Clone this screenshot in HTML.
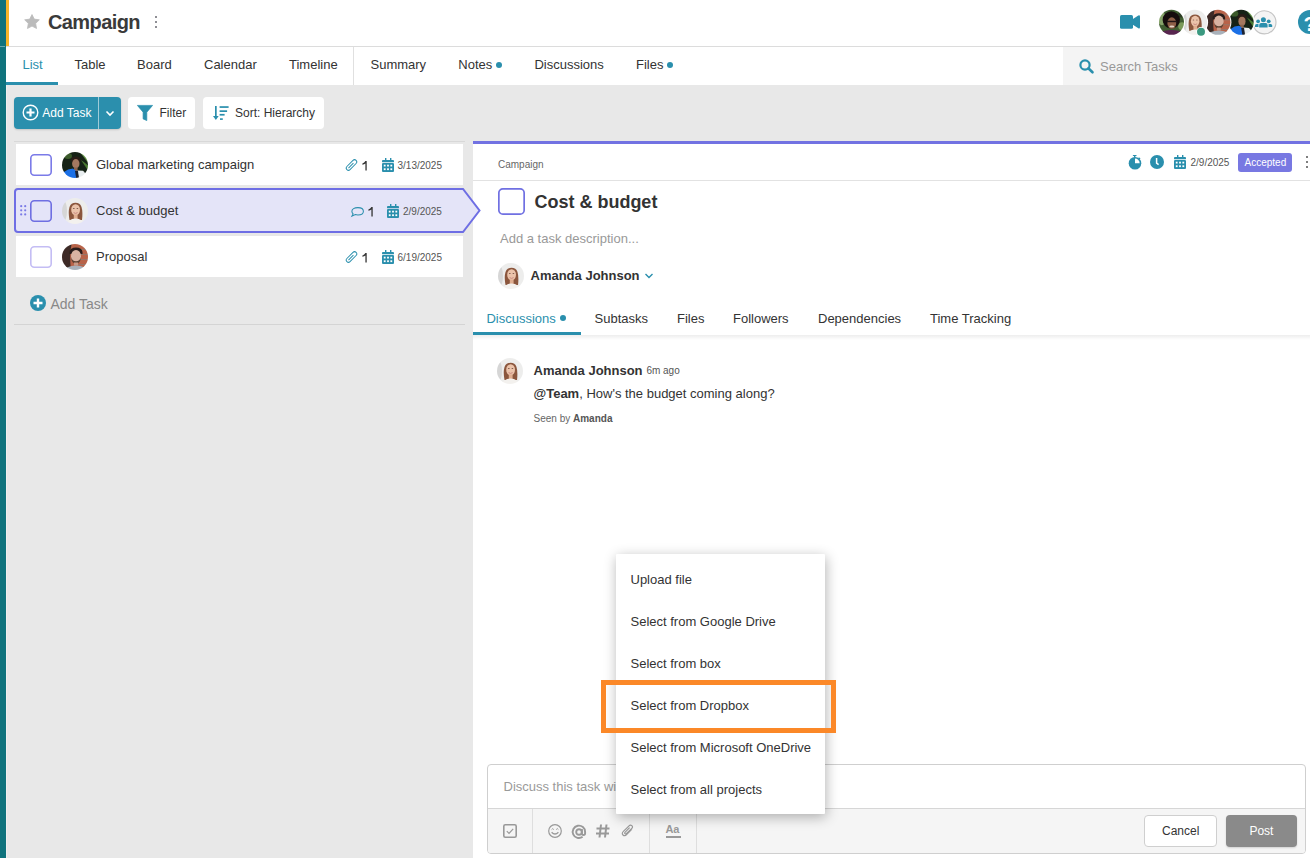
<!DOCTYPE html>
<html><head><meta charset="utf-8">
<style>
*{box-sizing:border-box;margin:0;padding:0}
html,body{width:1310px;height:858px;overflow:hidden;background:#e8e8e8;font-family:"Liberation Sans",sans-serif;color:#333;position:relative}
.a{position:absolute}
svg{overflow:visible}
.t{position:absolute;white-space:nowrap;line-height:1}
</style></head><body>
<svg width="0" height="0" style="position:absolute">
<defs>
<clipPath id="cc"><circle cx="13" cy="13" r="13"/></clipPath>
<filter id="bl" x="-10%" y="-10%" width="120%" height="120%"><feGaussianBlur stdDeviation="0.55"/></filter>
<symbol id="av1" viewBox="0 0 26 26"><g clip-path="url(#cc)"><g filter="url(#bl)">
<rect x="-2" y="-2" width="30" height="30" fill="#3f5d30"/>
<ellipse cx="3" cy="9" rx="4" ry="7" fill="#86a36a"/>
<ellipse cx="24" cy="17" rx="4" ry="4" fill="#7a9a5a"/>
<ellipse cx="23" cy="5" rx="3" ry="3" fill="#2a3a20"/>
<ellipse cx="12.8" cy="10.5" rx="9" ry="9" fill="#15100d"/>
<ellipse cx="13.3" cy="13.8" rx="4.6" ry="6" fill="#8d5f47"/>
<rect x="8.3" y="11.4" width="10.2" height="1.5" fill="#201818"/>
<ellipse cx="13.3" cy="17.4" rx="2.6" ry="1.1" fill="#e4d6c8"/>
<path d="M-1 28Q2 20.5 13 21Q24 20.5 27 28z" fill="#58284f"/>
</g></g></symbol>
<symbol id="av2" viewBox="0 0 26 26"><g clip-path="url(#cc)"><g filter="url(#bl)">
<rect x="-2" y="-2" width="30" height="30" fill="#ededec"/>
<ellipse cx="2" cy="13" rx="3" ry="10" fill="#d6d6d6"/>
<path d="M7.5 22Q6 14 7.5 9Q9 4.8 13.5 4.8Q18 4.8 19.5 9Q21 14 20 22z" fill="#8b573e"/>
<ellipse cx="13.6" cy="11.8" rx="4.4" ry="5.6" fill="#ebc3aa"/>
<ellipse cx="11.8" cy="10.6" rx="0.9" ry="0.5" fill="#7a5548"/>
<ellipse cx="15.4" cy="10.6" rx="0.9" ry="0.5" fill="#7a5548"/>
<path d="M11.6 14.6Q13.6 16.2 15.6 14.6" stroke="#c98880" stroke-width="1" fill="none"/>
<rect x="11.8" y="16.5" width="3.8" height="4.5" fill="#e0ae90"/>
<path d="M4 28Q6 20.5 13.6 20.5Q21 20.5 23 28z" fill="#f3f1ee"/>
</g></g></symbol>
<symbol id="av3" viewBox="0 0 26 26"><g clip-path="url(#cc)"><g filter="url(#bl)">
<rect x="-2" y="-2" width="30" height="30" fill="#b8644a"/>
<path d="M16 5.5H28M15 10.5H28M15 15.5H28M16 20.5H28" stroke="#8e7a70" stroke-width="0.8"/>
<path d="M-2 -2H10Q7 10 9 26H-2z" fill="#3d2c25"/>
<path d="M7.5 8Q8 3.5 14 3.5Q20 3.5 20.5 8V10H7.5z" fill="#2a1f1a"/>
<ellipse cx="14" cy="12.3" rx="5" ry="6.4" fill="#d9b3a2"/>
<path d="M9 13Q9.5 19.6 14 19.8Q18.5 19.6 19 13Q17.8 17.2 14 17.2Q10.2 17.2 9 13z" fill="#5b4131"/>
<rect x="12" y="18.5" width="4" height="3" fill="#c89a86"/>
<path d="M1 28Q4 21.5 14 21.5Q24 21.5 26 28z" fill="#a9b1ba"/>
</g></g></symbol>
<symbol id="av4" viewBox="0 0 26 26"><g clip-path="url(#cc)"><g filter="url(#bl)">
<rect x="-2" y="-2" width="30" height="30" fill="#172416"/>
<path d="M17 -1L27 12V4z" fill="#5f8f42"/>
<path d="M19 8L27 20V14z" fill="#4a7a32"/>
<ellipse cx="6" cy="4" rx="4" ry="3" fill="#3a5a2a"/>
<ellipse cx="13.8" cy="8.2" rx="4.8" ry="3.8" fill="#2a1e16"/>
<ellipse cx="13.8" cy="11.8" rx="3.7" ry="4.7" fill="#a47860"/>
<rect x="12" y="15.5" width="3.6" height="3.5" fill="#8a6450"/>
<path d="M-1 28Q0 17 11 16.5L14 19 16 28z" fill="#1d6fe6"/>
<path d="M15.5 18.5L21 18.8Q24 21 24 26L17 28z" fill="#e9eef0"/>
<path d="M13 19L16 19 17 28 14.5 28z" fill="#1a2230"/>
<path d="M20 26L26 22 26 28 19 28z" fill="#1d6fe6"/>
</g></g></symbol>
</defs></svg>
<!-- left stripes -->
<div class="a" style="left:0;top:0;width:6px;height:858px;background:#0f737d"></div>
<div class="a" style="left:0;top:46px;width:5px;height:1px;background:#6aa7ad"></div>
<div class="a" style="left:6px;top:0;width:1px;height:858px;background:#f0f0f0"></div>
<!-- header -->
<div class="a" style="left:6px;top:0;width:1304px;height:46px;background:#fff"></div>
<div class="a" style="left:6px;top:0;width:3px;height:46px;background:#f6b52a"></div>
<div class="a" style="left:6px;top:46px;width:1304px;height:1px;background:#dcdcdc"></div>
<!-- tab bar -->
<div class="a" style="left:6px;top:47px;width:1304px;height:38px;background:#fff"></div>

<!-- header content -->
<svg class="a" style="left:24px;top:14px" width="16" height="15.3" viewBox="0 0 24 23"><path d="M12 0.8l3.4 6.9 7.6 1.1-5.5 5.4 1.3 7.6L12 18.2l-6.8 3.6 1.3-7.6L1 8.8l7.6-1.1z" fill="#bbb" stroke="#bbb" stroke-width="1.2" stroke-linejoin="round"/></svg>
<div class="t" style="left:48px;top:11.8px;font-size:20px;font-weight:bold;color:#3a3a3a;letter-spacing:-0.6px">Campaign</div>
<div class="a" style="left:155px;top:16.3px;width:2px;height:2px;border-radius:1px;background:#6a6a72"></div>
<div class="a" style="left:155px;top:21px;width:2px;height:2px;border-radius:1px;background:#6a6a72"></div>
<div class="a" style="left:155px;top:25.7px;width:2px;height:2px;border-radius:1px;background:#6a6a72"></div>
<!-- video icon -->
<svg class="a" style="left:1120px;top:15px" width="20" height="14" viewBox="0 0 20 14"><rect x="0" y="0" width="13" height="13.8" rx="1.6" fill="#2a8fad"/><path d="M12.5 4.2L18.3 0.5Q20 -0.2 20 1.6V12.2Q20 14 18.3 13.3L12.5 9.6z" fill="#2a8fad"/></svg>
<!-- avatars -->
<svg class="a" style="left:1150px;top:0px" width="140" height="46" viewBox="1150 0 140 46">
<circle cx="1264.4" cy="22.3" r="11.6" fill="#f4f4f4" stroke="#c4c4c4" stroke-width="1.1"/>
<circle cx="1241.2" cy="22.3" r="13.5" fill="#fff"/><svg x="1228.7" y="9.8" width="25" height="25" viewBox="0 0 26 26"><use href="#av4"/></svg>
<circle cx="1217.9" cy="22.3" r="13.5" fill="#fff"/><svg x="1205.4" y="9.8" width="25" height="25" viewBox="0 0 26 26"><use href="#av3"/></svg>
<circle cx="1194.6" cy="22.3" r="13.5" fill="#fff"/><svg x="1182.1" y="9.8" width="25" height="25" viewBox="0 0 26 26"><use href="#av2"/></svg>
<circle cx="1171.5" cy="22.3" r="13.5" fill="#fff"/><svg x="1159" y="9.8" width="25" height="25" viewBox="0 0 26 26"><use href="#av1"/></svg>
<circle cx="1201" cy="31.8" r="4.8" fill="#fff"/><circle cx="1201" cy="31.8" r="4" fill="#3b9980"/>
</svg>
<svg class="a" style="left:1254px;top:16px" width="20" height="13" viewBox="1254 16 20 13"><g fill="#2a8fad"><circle cx="1263.4" cy="19.8" r="2.5"/><circle cx="1258.1" cy="21.3" r="1.9"/><circle cx="1268.7" cy="21.3" r="1.9"/><path d="M1259.2 27.6V25Q1259.2 23 1261.2 23H1265.6Q1267.6 23 1267.6 25V27.6z"/><path d="M1255 27V25.5Q1255 23.9 1256.6 23.9H1258.5V27z"/><path d="M1272.2 27V25.5Q1272.2 23.9 1270.6 23.9H1268.6V27z"/></g></svg>
<div class="a" style="left:1298px;top:10px;width:24px;height:24px;border-radius:50%;background:#2a8fad"></div>
<div class="t" style="left:1303.5px;top:12.5px;font-size:21px;font-weight:bold;color:#fff">?</div>

<!-- tabs -->
<div class="t" style="left:22.5px;top:57.8px;font-size:13px;color:#2a8fad">List</div>
<div class="a" style="left:6px;top:82px;width:52px;height:3px;background:#2a8fad"></div>
<div class="t" style="left:74.5px;top:57.8px;font-size:13px">Table</div>
<div class="t" style="left:137px;top:57.8px;font-size:13px">Board</div>
<div class="t" style="left:204px;top:57.8px;font-size:13px">Calendar</div>
<div class="t" style="left:289px;top:57.8px;font-size:13px">Timeline</div>
<div class="a" style="left:353px;top:47px;width:1px;height:38px;background:#e0e0e0"></div>
<div class="t" style="left:370.5px;top:57.8px;font-size:13px">Summary</div>
<div class="t" style="left:458.3px;top:57.8px;font-size:13px">Notes</div>
<div class="a" style="left:496px;top:62px;width:6px;height:6px;border-radius:50%;background:#2a8fad"></div>
<div class="t" style="left:534.4px;top:57.8px;font-size:13px">Discussions</div>
<div class="t" style="left:636px;top:57.8px;font-size:13px">Files</div>
<div class="a" style="left:667px;top:62px;width:6px;height:6px;border-radius:50%;background:#2a8fad"></div>
<!-- search -->
<div class="a" style="left:1063px;top:47px;width:247px;height:38px;background:#f4f4f4"></div>
<svg class="a" style="left:1079px;top:59px" width="16" height="14" viewBox="0 0 16 14"><circle cx="6" cy="6" r="4.6" fill="none" stroke="#2a8fad" stroke-width="2.2"/><path d="M9.3 9.3L13.5 13.3" stroke="#2a8fad" stroke-width="2.6" stroke-linecap="round"/></svg>
<div class="t" style="left:1100px;top:59.8px;font-size:13px;color:#999">Search Tasks</div>
<!-- toolbar -->
<div class="a" style="left:14px;top:97px;width:107px;height:32px;border-radius:4px;background:#2b8fad;box-shadow:0 1px 2px rgba(0,0,0,.15)"></div>
<div class="a" style="left:98px;top:97px;width:1px;height:32px;background:#9fcbd8"></div>
<svg class="a" style="left:22.3px;top:104.3px" width="17" height="17" viewBox="0 0 17 17"><circle cx="8.5" cy="8.5" r="7.3" fill="none" stroke="#fff" stroke-width="1.4"/><path d="M8.5 4.5v8M4.5 8.5h8" stroke="#fff" stroke-width="2.2"/></svg>
<div class="t" style="left:42.3px;top:106.6px;font-size:12px;color:#fff">Add Task</div>
<svg class="a" style="left:105px;top:110px" width="10" height="7" viewBox="0 0 10 7"><path d="M1.5 1.5L5 5 8.5 1.5" fill="none" stroke="#fff" stroke-width="1.6"/></svg>

<div class="a" style="left:128px;top:97px;width:67px;height:32px;border-radius:4px;background:#fff"></div>
<svg class="a" style="left:137px;top:105px" width="16" height="16" viewBox="0 0 16 16"><path d="M0.4 0.4H15.6L9.8 7.2V15.6L6.1 13.9V7.2z" fill="#2a8fad" stroke="#2a8fad" stroke-width="0.7" stroke-linejoin="round"/></svg>
<div class="t" style="left:159.5px;top:106.6px;font-size:12px">Filter</div>

<div class="a" style="left:203px;top:97px;width:121px;height:32px;border-radius:4px;background:#fff"></div>
<svg class="a" style="left:212.7px;top:106px" width="17" height="15" viewBox="0 0 17 15"><g fill="#2a8fad"><rect x="2" y="0" width="1.7" height="11.5"/><path d="M0 10h5.7L2.85 13.9z"/><rect x="6.6" y="0.2" width="9" height="1.7"/><rect x="6.6" y="4.3" width="7.5" height="1.7"/><rect x="6.6" y="7.9" width="5" height="1.7"/><rect x="7" y="12.3" width="2.8" height="1.6"/></g></svg>
<div class="t" style="left:235px;top:106.6px;font-size:12px">Sort: Hierarchy</div>

<!-- panel bg -->
<div class="a" style="left:473px;top:141px;width:837px;height:717px;background:#fff"></div>
<div class="a" style="left:473px;top:141px;width:837px;height:3px;background:#7272e2"></div>
<!-- task list -->
<div class="a" style="left:14px;top:141px;width:451px;height:1px;background:#d8d8d8"></div>
<div class="a" style="left:16px;top:144px;width:447px;height:41px;background:#fff"></div>
<svg class="a" style="left:30px;top:154px" width="22" height="22" viewBox="0 0 22 22"><rect x="0.8" y="0.8" width="20.4" height="20.4" rx="3.5" fill="#fff" stroke="#7b7be8" stroke-width="1.6"/></svg>
<svg class="a" style="left:62px;top:152px" width="26" height="26" viewBox="0 0 26 26"><use href="#av4"/></svg>
<div class="t" style="left:96px;top:158px;font-size:13px">Global marketing campaign</div>
<svg class="a" style="left:346px;top:159px" width="11" height="12" viewBox="0 0 11 12"><g transform="rotate(-45 5.5 6)" fill="none" stroke="#2a8fad" stroke-width="0.95"><rect x="-1" y="3.8" width="13" height="4.4" rx="2.2"/><path d="M1.2 6H8.2"/></g></svg>
<svg class="a" style="left:361.8px;top:160.8px" width="5" height="9.4" viewBox="0 0 5 9.4"><path d="M3.4 0H4.7V9.4H3.4V2.4Q2.3 3.3 0.4 3.7V2.5Q2.4 1.9 3.4 0z" fill="#333"/></svg>
<svg class="a" style="left:382px;top:158px" width="12" height="14" viewBox="0 0 12 14"><g fill="#2a8fad"><rect x="0" y="2" width="12" height="2.3" rx="0.9"/><rect x="0" y="4.9" width="12" height="9.1" rx="1.1"/><rect x="3" y="0" width="1.4" height="2.6"/><rect x="8" y="0" width="1.4" height="2.6"/></g><g fill="#fff"><rect x="1.8" y="6.7" width="1.8" height="1.8"/><rect x="5.1" y="6.7" width="1.8" height="1.8"/><rect x="8.4" y="6.7" width="1.8" height="1.8"/><rect x="1.8" y="10.3" width="1.8" height="1.8"/><rect x="5.1" y="10.3" width="1.8" height="1.8"/><rect x="8.4" y="10.3" width="1.8" height="1.8"/></g></svg>
<div class="t" style="left:397.5px;top:160.5px;font-size:10px;color:#555">3/13/2025</div>

<!-- selected row -->
<svg class="a" style="left:14px;top:188px" width="468" height="46" viewBox="0 0 468 46"><path d="M4 1H449L465.5 22.5 449 44H4Q1 44 1 41V4Q1 1 4 1z" fill="#e4e4f8" stroke="#6e6ee4" stroke-width="2"/></svg>
<svg class="a" style="left:20px;top:205px" width="7" height="11" viewBox="0 0 7 11"><g fill="#7a7ae6"><circle cx="1.2" cy="1.2" r="1.1"/><circle cx="5.2" cy="1.2" r="1.1"/><circle cx="1.2" cy="5.3" r="1.1"/><circle cx="5.2" cy="5.3" r="1.1"/><circle cx="1.2" cy="9.4" r="1.1"/><circle cx="5.2" cy="9.4" r="1.1"/></g></svg>
<svg class="a" style="left:30px;top:200px" width="22" height="22" viewBox="0 0 22 22"><rect x="0.8" y="0.8" width="20.4" height="20.4" rx="3.5" fill="none" stroke="#6f6fe2" stroke-width="1.6"/></svg>
<svg class="a" style="left:62px;top:198px" width="26" height="26" viewBox="0 0 26 26"><use href="#av2"/></svg>
<div class="t" style="left:96px;top:204px;font-size:13px">Cost &amp; budget</div>
<svg class="a" style="left:350.5px;top:206.5px" width="14" height="12" viewBox="0 0 14 12"><path d="M6.9 0.6C10.2 0.6 12.4 2.2 12.4 4.3S10.2 8 6.9 8C6 8 5.1 7.9 4.3 7.6L0.9 9.2 2.1 6.9C1.3 6.2 0.9 5.3 0.9 4.3 0.9 2.2 3.3 0.6 6.9 0.6z" fill="none" stroke="#2a8fad" stroke-width="1.05"/></svg>
<svg class="a" style="left:367.9px;top:206.8px" width="5" height="9.4" viewBox="0 0 5 9.4"><path d="M3.4 0H4.7V9.4H3.4V2.4Q2.3 3.3 0.4 3.7V2.5Q2.4 1.9 3.4 0z" fill="#333"/></svg>
<svg class="a" style="left:387px;top:204px" width="12" height="14" viewBox="0 0 12 14"><g fill="#2a8fad"><rect x="0" y="2" width="12" height="2.3" rx="0.9"/><rect x="0" y="4.9" width="12" height="9.1" rx="1.1"/><rect x="3" y="0" width="1.4" height="2.6"/><rect x="8" y="0" width="1.4" height="2.6"/></g><g fill="#fff"><rect x="1.8" y="6.7" width="1.8" height="1.8"/><rect x="5.1" y="6.7" width="1.8" height="1.8"/><rect x="8.4" y="6.7" width="1.8" height="1.8"/><rect x="1.8" y="10.3" width="1.8" height="1.8"/><rect x="5.1" y="10.3" width="1.8" height="1.8"/><rect x="8.4" y="10.3" width="1.8" height="1.8"/></g></svg>
<div class="t" style="left:403px;top:207.3px;font-size:10px;color:#555">2/9/2025</div>

<!-- row 3 -->
<div class="a" style="left:16px;top:236px;width:447px;height:41px;background:#fff"></div>
<svg class="a" style="left:30px;top:246px" width="22" height="22" viewBox="0 0 22 22"><rect x="0.8" y="0.8" width="20.4" height="20.4" rx="3.5" fill="#fff" stroke="#c4bdf4" stroke-width="1.6"/></svg>
<svg class="a" style="left:62px;top:244px" width="26" height="26" viewBox="0 0 26 26"><use href="#av3"/></svg>
<div class="t" style="left:96px;top:250px;font-size:13px">Proposal</div>
<svg class="a" style="left:346px;top:251px" width="11" height="12" viewBox="0 0 11 12"><g transform="rotate(-45 5.5 6)" fill="none" stroke="#2a8fad" stroke-width="0.95"><rect x="-1" y="3.8" width="13" height="4.4" rx="2.2"/><path d="M1.2 6H8.2"/></g></svg>
<svg class="a" style="left:361.8px;top:252.8px" width="5" height="9.4" viewBox="0 0 5 9.4"><path d="M3.4 0H4.7V9.4H3.4V2.4Q2.3 3.3 0.4 3.7V2.5Q2.4 1.9 3.4 0z" fill="#333"/></svg>
<svg class="a" style="left:382px;top:250px" width="12" height="14" viewBox="0 0 12 14"><g fill="#2a8fad"><rect x="0" y="2" width="12" height="2.3" rx="0.9"/><rect x="0" y="4.9" width="12" height="9.1" rx="1.1"/><rect x="3" y="0" width="1.4" height="2.6"/><rect x="8" y="0" width="1.4" height="2.6"/></g><g fill="#fff"><rect x="1.8" y="6.7" width="1.8" height="1.8"/><rect x="5.1" y="6.7" width="1.8" height="1.8"/><rect x="8.4" y="6.7" width="1.8" height="1.8"/><rect x="1.8" y="10.3" width="1.8" height="1.8"/><rect x="5.1" y="10.3" width="1.8" height="1.8"/><rect x="8.4" y="10.3" width="1.8" height="1.8"/></g></svg>
<div class="t" style="left:397.5px;top:252.5px;font-size:10px;color:#555">6/19/2025</div>

<!-- add task -->
<svg class="a" style="left:30px;top:295px" width="16" height="16" viewBox="0 0 16 16"><circle cx="8" cy="8" r="8" fill="#2a8fad"/><path d="M8 3.5v9M3.5 8h9" stroke="#fff" stroke-width="2.4"/></svg>
<div class="t" style="left:50.5px;top:296.5px;font-size:14px;color:#888">Add Task</div>
<div class="a" style="left:14px;top:324px;width:451px;height:1px;background:#d4d4d4"></div>
<!-- right panel -->
<div class="t" style="left:498px;top:159.5px;font-size:10px;color:#666">Campaign</div>
<!-- stopwatch -->
<svg class="a" style="left:1128px;top:154px" width="14" height="16" viewBox="0 0 14 16"><g fill="#2a8fad"><rect x="4.8" y="0.9" width="3.8" height="1.1" rx=".5"/><rect x="6" y="1.8" width="1.4" height="1.8"/><path d="M11 3.2l1.5 1.3-0.9 1-1.5-1.3z"/><circle cx="7" cy="9.2" r="6.3"/></g><path d="M7 9.2V4.5A4.7 4.7 0 0 1 11.7 9.2z" fill="#fff"/></svg>
<svg class="a" style="left:1150px;top:155px" width="14" height="14" viewBox="0 0 14 14"><circle cx="7" cy="7" r="7" fill="#2a8fad"/><path d="M6.6 3V8.2L8.6 9.6" fill="none" stroke="#fff" stroke-width="1.5"/></svg>
<svg class="a" style="left:1174px;top:155px" width="12" height="14" viewBox="0 0 12 14"><g fill="#2a8fad"><rect x="0" y="2" width="12" height="2.3" rx="0.9"/><rect x="0" y="4.9" width="12" height="9.1" rx="1.1"/><rect x="3" y="0" width="1.4" height="2.6"/><rect x="8" y="0" width="1.4" height="2.6"/></g><g fill="#fff"><rect x="1.8" y="6.7" width="1.8" height="1.8"/><rect x="5.1" y="6.7" width="1.8" height="1.8"/><rect x="8.4" y="6.7" width="1.8" height="1.8"/><rect x="1.8" y="10.3" width="1.8" height="1.8"/><rect x="5.1" y="10.3" width="1.8" height="1.8"/><rect x="8.4" y="10.3" width="1.8" height="1.8"/></g></svg>
<div class="t" style="left:1190.5px;top:157.5px;font-size:10px;color:#555">2/9/2025</div>
<div class="a" style="left:1238px;top:153px;width:54px;height:19px;border-radius:3px;background:#7878e2"></div>
<div class="t" style="left:1244.5px;top:157.5px;font-size:10px;color:#fff">Accepted</div>
<div class="a" style="left:1305.5px;top:155.5px;width:2px;height:2px;border-radius:1px;background:#555"></div>
<div class="a" style="left:1305.5px;top:160.5px;width:2px;height:2px;border-radius:1px;background:#555"></div>
<div class="a" style="left:1305.5px;top:165.5px;width:2px;height:2px;border-radius:1px;background:#555"></div>
<div class="a" style="left:473px;top:180px;width:837px;height:1px;background:#e2e2e2"></div>

<svg class="a" style="left:498px;top:188px" width="27" height="27" viewBox="0 0 27 27"><rect x="0.85" y="0.85" width="25.3" height="25.3" rx="4" fill="none" stroke="#7070e2" stroke-width="1.7"/></svg>
<div class="t" style="left:534.4px;top:192.5px;font-size:18px;font-weight:bold;color:#333">Cost &amp; budget</div>
<div class="t" style="left:500px;top:231.5px;font-size:13px;color:#999">Add a task description...</div>
<svg class="a" style="left:498px;top:263px" width="26" height="26" viewBox="0 0 26 26"><use href="#av2"/></svg>
<div class="t" style="left:530.5px;top:269px;font-size:13px;font-weight:bold;color:#333">Amanda Johnson</div>
<svg class="a" style="left:644px;top:272px" width="10" height="8" viewBox="0 0 10 8"><path d="M1.5 2L5 5.5 8.5 2" fill="none" stroke="#2a8fad" stroke-width="1.4"/></svg>

<!-- panel tabs -->
<div class="t" style="left:486.4px;top:311.5px;font-size:13px;color:#2a8fad">Discussions</div>
<div class="a" style="left:559.5px;top:314.5px;width:6px;height:6px;border-radius:50%;background:#2a8fad"></div>
<div class="t" style="left:594.5px;top:311.5px;font-size:13px">Subtasks</div>
<div class="t" style="left:677px;top:311.5px;font-size:13px">Files</div>
<div class="t" style="left:733px;top:311.5px;font-size:13px">Followers</div>
<div class="t" style="left:818px;top:311.5px;font-size:13px">Dependencies</div>
<div class="t" style="left:930px;top:311.5px;font-size:13px">Time Tracking</div>
<div class="a" style="left:473px;top:332px;width:108px;height:3px;background:#2a8fad"></div>
<div class="a" style="left:473px;top:335px;width:837px;height:5px;background:linear-gradient(rgba(0,0,0,.07),rgba(0,0,0,0))"></div>

<!-- message -->
<svg class="a" style="left:497px;top:358px" width="26" height="26" viewBox="0 0 26 26"><use href="#av2"/></svg>
<div class="t" style="left:533.5px;top:363.5px;font-size:13px;font-weight:bold;color:#333">Amanda Johnson</div>
<div class="t" style="left:646.4px;top:365.5px;font-size:10px;color:#555">6m ago</div>
<div class="t" style="left:533.5px;top:387px;font-size:13px;color:#333"><b>@Team</b>, How's the budget coming along?</div>
<div class="t" style="left:533.5px;top:413.5px;font-size:10px;color:#666">Seen by <b style="color:#555">Amanda</b></div>

<!-- composer -->
<div class="a" style="left:487px;top:764px;width:819px;height:90px;border:1px solid #cfcfcf;border-radius:4px;background:#fff;overflow:hidden">
  <div class="a" style="left:0;top:43px;width:819px;height:47px;background:#f5f5f5;border-top:1px solid #d6d6d6"></div>
</div>
<div class="t" style="left:503.5px;top:780px;font-size:13px;color:#9a9a9a">Discuss this task wi</div>
<div class="a" style="left:532px;top:809px;width:1px;height:44px;background:#dedede"></div>
<div class="a" style="left:649px;top:809px;width:1px;height:44px;background:#dedede"></div>
<div class="a" style="left:696px;top:809px;width:1px;height:44px;background:#dedede"></div>
<svg class="a" style="left:503px;top:824px" width="14" height="14" viewBox="0 0 14 14"><rect x="0.8" y="0.8" width="12.4" height="12.4" rx="1.5" fill="none" stroke="#999" stroke-width="1.6"/><path d="M3.8 7.2l2.2 2.2 4.2-4.6" fill="none" stroke="#999" stroke-width="1.2"/></svg>
<svg class="a" style="left:548px;top:824px" width="14" height="14" viewBox="0 0 14 14"><circle cx="7" cy="7" r="6.3" fill="none" stroke="#999" stroke-width="1.2"/><path d="M3.6 5.6l1.1-1 1.1 1M8.2 5.6l1.1-1 1.1 1" fill="none" stroke="#999" stroke-width="1"/><path d="M3.6 8.2Q7 11.8 10.4 8.2" fill="none" stroke="#999" stroke-width="1.3"/></svg>
<svg class="a" style="left:572px;top:824.5px" width="14" height="14" viewBox="0 0 14 14"><path d="M10.6 11.8A6.2 6.2 0 1 1 13.1 7V8.2Q13.1 10 11.5 10 9.9 10 9.9 8.2V4" fill="none" stroke="#999" stroke-width="1.9"/><circle cx="7" cy="7" r="2.8" fill="none" stroke="#999" stroke-width="1.9"/></svg>
<svg class="a" style="left:596px;top:823.8px" width="14" height="14" viewBox="0 0 14 14"><path d="M5 0.5L3.5 13.5M10.5 0.5L9 13.5M0.5 4.5H13.5M0 9.5H13" fill="none" stroke="#999" stroke-width="2"/></svg>
<svg class="a" style="left:621px;top:823.8px" width="13" height="13" viewBox="0 0 13 13"><path d="M11 5.2L5.6 10.6Q3.6 12.6 2 11 0.4 9.4 2.4 7.4L8 1.8Q9.4 0.4 10.8 1.6 12.2 2.9 10.8 4.3L5.6 9.5Q4.7 10.4 4 9.7 3.3 9 4.2 8.1L8.6 3.7" fill="none" stroke="#999" stroke-width="1.2"/></svg>
<div class="t" style="left:665.5px;top:824px;font-size:11px;font-weight:bold;color:#999;letter-spacing:-0.3px">Aa</div>
<div class="a" style="left:666px;top:836px;width:15px;height:1.7px;background:#999"></div>
<div class="a" style="left:1144px;top:815px;width:73px;height:32px;border:1px solid #cfcfcf;border-radius:4px;background:#fff"></div>
<div class="t" style="left:1162px;top:824.6px;font-size:12px;color:#333">Cancel</div>
<div class="a" style="left:1226px;top:815px;width:71px;height:32px;border-radius:4px;background:#8a8a8a;box-shadow:0 1px 2px rgba(0,0,0,.15)"></div>
<div class="t" style="left:1249.4px;top:824.6px;font-size:12px;color:#fff">Post</div>

<!-- dropdown menu -->
<div class="a" style="left:616px;top:554px;width:209px;height:260px;background:#fff;box-shadow:1px 3px 13px rgba(0,0,0,.3);border-radius:1px"></div>
<div class="t" style="left:630.5px;top:573px;font-size:13px">Upload file</div>
<div class="t" style="left:630.5px;top:615px;font-size:13px">Select from Google Drive</div>
<div class="t" style="left:630.5px;top:657px;font-size:13px">Select from box</div>
<div class="t" style="left:630.5px;top:699px;font-size:13px">Select from Dropbox</div>
<div class="t" style="left:630.5px;top:741px;font-size:13px">Select from Microsoft OneDrive</div>
<div class="t" style="left:630.5px;top:783px;font-size:13px">Select from all projects</div>
<div class="a" style="left:601px;top:680px;width:235px;height:53px;border:5px solid #fb8828"></div>

</body></html>
